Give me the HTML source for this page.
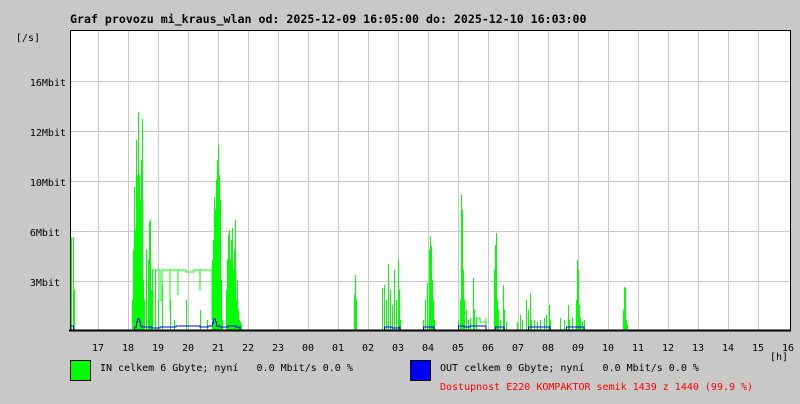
<!DOCTYPE html>
<html><head><meta charset="utf-8"><style>
body{margin:0;background:#c8c8c8;width:800px;height:400px;overflow:hidden;font-family:"DejaVu Sans Mono","Liberation Mono",monospace;}
svg text{font-family:"DejaVu Sans Mono","Liberation Mono",monospace;font-size:10px;white-space:pre;}
</style></head><body>
<svg width="800" height="400" xmlns="http://www.w3.org/2000/svg" xml:space="preserve">
<rect width="800" height="400" fill="#c8c8c8"/>
<text x="70" y="23" font-weight="bold" fill="#000" style="font-size:11.6px">Graf provozu mi_kraus_wlan od: 2025-12-09 16:05:00 do: 2025-12-10 16:03:00</text>
<rect x="70" y="30" width="720" height="300" fill="#fff"/>
<g stroke="#c8c8c8" stroke-width="1">
<path d="M98.5 30V330M128.5 30V330M158.5 30V330M188.5 30V330M218.5 30V330M248.5 30V330M278.5 30V330M308.5 30V330M338.5 30V330M368.5 30V330M398.5 30V330M428.5 30V330M458.5 30V330M488.5 30V330M518.5 30V330M548.5 30V330M578.5 30V330M608.5 30V330M638.5 30V330M668.5 30V330M698.5 30V330M728.5 30V330M758.5 30V330"/>
<path d="M70 81.5H790M70 131.5H790M70 181.5H790M70 231.5H790M70 281.5H790"/>
</g>
<g stroke="#00ff00" stroke-width="1" fill="none" shape-rendering="crispEdges">
<path d="M71.5 330V238H73.5V245V330M74.5 330V290V330"/>
<path d="M132.5 330V300M133.5 330V250M134.5 330V187M135.5 330V230M136.5 330V140M137.5 330V175M138.5 330V112M139.5 330V175M140.5 330V200M141.5 330V160M142.5 330V119M143.5 330V280M144.5 330V300M146.5 330V300V250M148.5 330V260M149.5 330V222M150.5 330V220M151.5 330V290"/>
<path d="M152.5 330V270H160V300H162V270H170V310V270H178V295V270H186V272H194V270H200V290V270H212V320"/>
<path d="M155.5 330V270M158.5 330V300M162.5 330V285M170.5 330V300M174.5 330V320M186.5 330V300M200.5 330V310M207.5 330V320"/>
<path d="M212.5 330V260M213.5 330V240M214.5 330V197M215.5 330V210M216.5 330V180M217.5 330V160M218.5 330V145M219.5 330V175M220.5 330V200M221.5 330V280M222.5 330V320"/>
<path d="M226.5 330V290M227.5 330V260M228.5 330V235M229.5 330V230M230.5 330V260M231.5 330V240M232.5 330V228M233.5 330V270M234.5 330V250M235.5 330V220M236.5 330V300M237.5 330V280M238.5 330V310M239.5 330V320M240.5 330V322M241.5 330V325"/>
<path d="M354.5 330V295M355.5 330V275M356.5 330V300"/>
<path d="M382.5 330V288M384.5 330V285M386.5 330V300M388.5 330V264M390.5 330V290M392.5 330V305M394.5 330V270M396.5 330V300M398.5 330V260M399.5 330V290M400.5 330V320"/>
<path d="M423.5 330V320M425.5 330V300M427.5 330V283M429.5 330V250M430.5 330V236M431.5 330V246M432.5 330V280M433.5 330V300M434.5 330V320"/>
<path d="M458.5 330V320M460.5 330V300M461.5 330V195M462.5 330V210M463.5 330V270M464.5 330V300M466.5 330V310M468.5 330V320M470.5 330V318M473.5 330V278M474.5 330V310M476.5 330V318H480V322H486V318V330"/>
<path d="M494.5 330V270M495.5 330V245M496.5 330V233M497.5 330V300M498.5 330V310M500.5 330V320M503.5 330V285M504.5 330V310M506.5 330V322"/>
<path d="M517.5 330V322M520.5 330V315M522.5 330V320M526.5 330V300M528.5 330V310M530.5 330V293M531.5 330V320M534.5 330V320M537.5 330V322M540.5 330V320M544.5 330V318M546.5 330V315M549.5 330V305M550.5 330V320"/>
<path d="M560.5 330V318M564.5 330V320M568.5 330V305M569.5 330V320M572.5 330V318M576.5 330V300M577.5 330V260M578.5 330V270M579.5 330V305M580.5 330V318M582.5 330V322M584.5 330V320"/>
<path d="M623.5 330V310M624.5 330V287M625.5 330V288M626.5 330V320M627.5 330V325"/>
</g>
<g stroke="#0000ff" stroke-width="1" fill="none" shape-rendering="crispEdges">
<path d="M70.5 330V326H73.5V330"/>
<path d="M134.5 330V327H136.5V322H137.5V319H139.5V322H140.5V326H142V327H152V328H160V327H176V326H200V327H208V326H212.5V323H213.5V319H215.5V322H216.5V326H220V327H228V326H236V327H240V330"/>
<path d="M384.5 330V327H392V328H399V327H400V330M423.5 330V327H434V330M458.5 330V326H464V327H470V326H486V330M495.5 330V327H504V330M528.5 330V327H550V330M566.5 330V327H584V330"/>
</g>
<path d="M70.5 30.5H790.5V330.5H70.5Z" fill="none" stroke="#000" stroke-width="1"/>
<path d="M69 330.5H791" stroke="#000" stroke-width="2"/>
<g fill="#000" text-anchor="end">
<text x="40" y="41">[/s]</text>
<text x="66" y="86">16Mbit</text>
<text x="66" y="136">12Mbit</text>
<text x="66" y="186">10Mbit</text>
<text x="60" y="236">6Mbit</text>
<text x="60" y="286">3Mbit</text>
</g>
<g fill="#000" text-anchor="middle">
<text x="98" y="351">17</text><text x="128" y="351">18</text><text x="158" y="351">19</text><text x="188" y="351">20</text><text x="218" y="351">21</text><text x="248" y="351">22</text><text x="278" y="351">23</text><text x="308" y="351">00</text><text x="338" y="351">01</text><text x="368" y="351">02</text><text x="398" y="351">03</text><text x="428" y="351">04</text><text x="458" y="351">05</text><text x="488" y="351">06</text><text x="518" y="351">07</text><text x="548" y="351">08</text><text x="578" y="351">09</text><text x="608" y="351">10</text><text x="638" y="351">11</text><text x="668" y="351">12</text><text x="698" y="351">13</text><text x="728" y="351">14</text><text x="758" y="351">15</text><text x="788" y="351">16</text>
<text x="779" y="360">[h]</text>
</g>
<rect x="70.5" y="360.5" width="20" height="20" fill="#00ff00" stroke="#000"/>
<text x="100" y="371" fill="#000">IN celkem 6 Gbyte; nyní   0.0 Mbit/s 0.0 %</text>
<rect x="410.5" y="360.5" width="20" height="20" fill="#0000ff" stroke="#000"/>
<text x="440" y="371" fill="#000">OUT celkem 0 Gbyte; nyní   0.0 Mbit/s 0.0 %</text>
<text x="440" y="390" fill="#ff0000">Dostupnost E220 KOMPAKTOR semik 1439 z 1440 (99.9 %)</text>
</svg>
</body></html>
